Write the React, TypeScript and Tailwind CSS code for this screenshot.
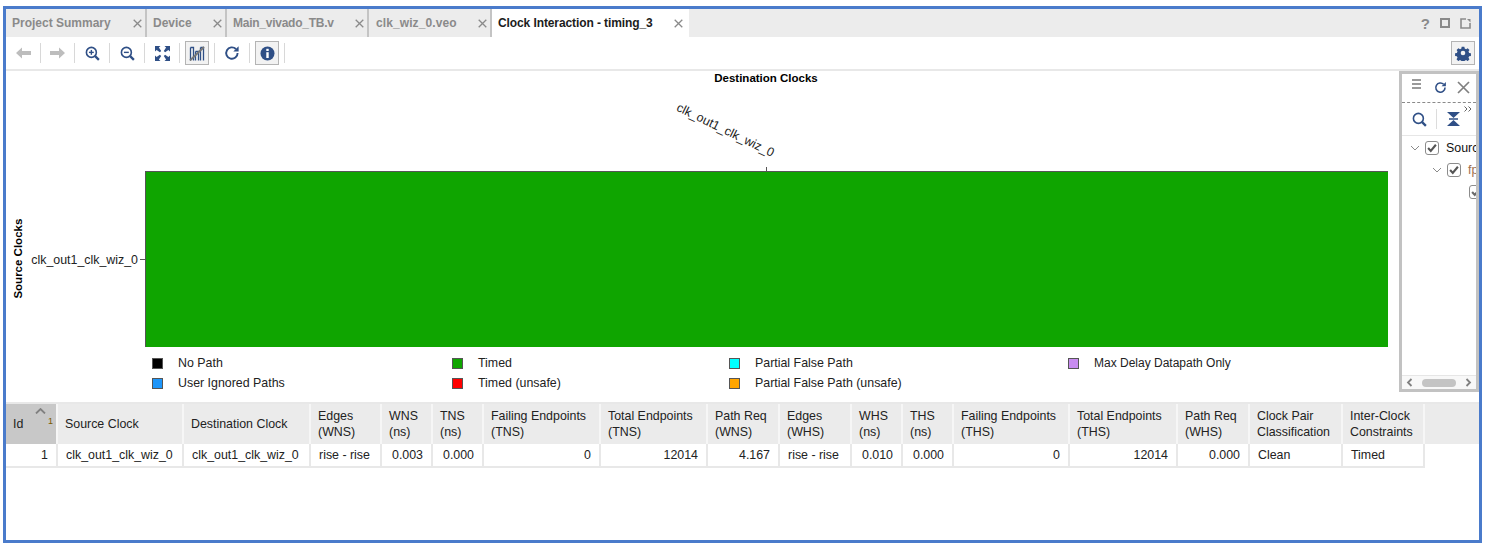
import React from "react";

const NAVY = "#2f4f86";

function X({ c = "#8a8a8a", s = 9, w = 1.3 }: { c?: string; s?: number; w?: number }) {
  return (
    <svg width={s} height={s} viewBox="0 0 9 9" className="shrink-0">
      <path d="M.7.7l7.6 7.6M8.3.7L.7 8.3" stroke={c} strokeWidth={w} fill="none" />
    </svg>
  );
}

const tabs = [
  { t: "Project Summary", w: "w-[141px] pl-[6px]", tr: "" },
  { t: "Device", w: "w-[80px] pl-[6px]", tr: "" },
  { t: "Main_vivado_TB.v", w: "w-[142px] pl-[6px]", tr: "tracking-[-0.25px]" },
  { t: "clk_wiz_0.veo", w: "w-[123px] pl-[7px]", tr: "tracking-[0.1px]" },
];

function Slot({ children }: { children: React.ReactNode }) {
  return (
    <div className="w-[35px] h-[20px] shrink-0 border-r border-[#d8d8d8] flex items-center justify-center">
      {children}
    </div>
  );
}

function Toggle({ children }: { children: React.ReactNode }) {
  return (
    <div className="w-[24px] h-[24px] border border-[#b4b4b4] bg-[#f2f2f2] flex items-center justify-center">
      {children}
    </div>
  );
}

function Lens({ sign }: { sign?: "plus" | "minus" }) {
  return (
    <svg width="15" height="15" viewBox="0 0 16 16">
      <circle cx="6.800" cy="6.800" r="5.300" fill="none" stroke={NAVY} strokeWidth="1.700" />
      <path d="M10.800 10.800l4 4" stroke={NAVY} strokeWidth="2.400" />
      {sign && <path d="M4.200 6.800h5.200" stroke={NAVY} strokeWidth="1.500" />}
      {sign === "plus" && <path d="M6.800 4.200v5.200" stroke={NAVY} strokeWidth="1.500" />}
    </svg>
  );
}

function Refresh({ s = 16 }: { s?: number }) {
  return (
    <svg width={s} height={s} viewBox="0 0 16 16">
      <path d="M13.600 8a5.700 5.700 0 1 1-1.700-4" fill="none" stroke={NAVY} strokeWidth="1.900" />
      <path d="M14.600 1.200v5.300H9.300z" fill={NAVY} />
    </svg>
  );
}

function Check({ gray }: { gray?: boolean }) {
  return (
    <div className="w-[14px] h-[14px] shrink-0 rounded-[3px] border border-[#8c8c8c] bg-white flex items-center justify-center">
      <svg width="10" height="10" viewBox="0 0 9 9">
        <path d="M1 4.500l2.400 2.600L8 1.600" fill="none" stroke={gray ? "#6a6a6a" : "#555"} strokeWidth="1.900" />
      </svg>
    </div>
  );
}

function Chevron() {
  return (
    <svg width="10" height="7" viewBox="0 0 10 7" className="shrink-0">
      <path d="M1 1l4 4 4-4" fill="none" stroke="#8a8a8a" strokeWidth="1" />
    </svg>
  );
}

function Legend({ c, t, tc = "" }: { c: string; t: string; tc?: string }) {
  return (
    <div className="flex items-center h-[20px]">
      <div className="w-[11px] h-[11px] border border-[#555] shrink-0" style={{ backgroundColor: c }} />
      <span className={`ml-[15px] whitespace-nowrap ${tc}`}>{t}</span>
    </div>
  );
}

const cols = [
  { w: "w-[52px]", h: ["Id"], v: "1", a: "r" },
  { w: "w-[126px]", h: ["Source Clock"], v: "clk_out1_clk_wiz_0", a: "l" },
  { w: "w-[127px]", h: ["Destination Clock"], v: "clk_out1_clk_wiz_0", a: "l" },
  { w: "w-[71px]", h: ["Edges", "(WNS)"], v: "rise - rise", a: "l" },
  { w: "w-[51px]", h: ["WNS", "(ns)"], v: "0.003", a: "r" },
  { w: "w-[51px]", h: ["TNS", "(ns)"], v: "0.000", a: "r" },
  { w: "w-[117px]", h: ["Failing Endpoints", "(TNS)"], v: "0", a: "r" },
  { w: "w-[107px]", h: ["Total Endpoints", "(TNS)"], v: "12014", a: "r" },
  { w: "w-[72px]", h: ["Path Req", "(WNS)"], v: "4.167", a: "r" },
  { w: "w-[72px]", h: ["Edges", "(WHS)"], v: "rise - rise", a: "l" },
  { w: "w-[51px]", h: ["WHS", "(ns)"], v: "0.010", a: "r" },
  { w: "w-[51px]", h: ["THS", "(ns)"], v: "0.000", a: "r" },
  { w: "w-[116px]", h: ["Failing Endpoints", "(THS)"], v: "0", a: "r" },
  { w: "w-[108px]", h: ["Total Endpoints", "(THS)"], v: "12014", a: "r" },
  { w: "w-[72px]", h: ["Path Req", "(WHS)"], v: "0.000", a: "r" },
  { w: "w-[93px]", h: ["Clock Pair", "Classification"], v: "Clean", a: "l" },
  { w: "w-[82px]", h: ["Inter-Clock", "Constraints"], v: "Timed", a: "l" },
];

export default function App() {
  return (
    <div className="w-[1490px] h-[556px] bg-white pt-[6px] pl-[3px] overflow-hidden" style={{ fontFamily: '"Liberation Sans", Arial, sans-serif' }}>
      <div className="w-[1479px] h-[537px] border-[3px] border-[#4a7bcb] bg-white flex flex-col text-[12.4px] text-[#222] overflow-hidden">
        {/* tabs */}
        <div className="h-[28px] bg-[#ececec] flex shrink-0 text-[12px]">
          {tabs.map((x) => (
            <div key={x.t} className={`${x.w} h-full shrink-0 flex items-center border-r-2 border-[#c4c4c4] pr-[3px] justify-between`}>
              <span className={`font-bold text-[#8a8a8a] whitespace-nowrap ${x.tr}`}>{x.t}</span>
              <X />
            </div>
          ))}
          <div className="w-[197px] h-full bg-white flex items-center pl-[6px] pr-[6px] justify-between shrink-0">
            <span className="font-bold text-[#1c1c1c] whitespace-nowrap tracking-[-0.1px]">Clock Interaction - timing_3</span>
            <X />
          </div>
          <div className="flex-1 flex items-center justify-end gap-[10px] pr-[8px]">
            <span className="font-bold text-[15px] text-[#8a8a8a] leading-none">?</span>
            <div className="w-[10px] h-[10px] border-2 border-[#8a8a8a]" />
            <svg width="11" height="11" viewBox="0 0 11 11">
              <path d="M6 1H1v9h9V5" fill="none" stroke="#8a8a8a" strokeWidth="1.600" />
              <path d="M7 1h3.500v3.500z" fill="#8a8a8a" />
            </svg>
          </div>
        </div>
        {/* toolbar */}
        <div className="h-[34px] border-b-2 border-[#e8e8e8] flex items-center shrink-0 pr-[4px]">
          <Slot><svg width="15" height="12" viewBox="0 0 15 12"><path d="M0 6l6-5.500V4h9v4H6v3.500z" fill="#bdbdbd" /></svg></Slot>
          <div className="w-[34px] h-[20px] shrink-0 border-r border-[#d8d8d8] flex items-center justify-center">
            <svg width="15" height="12" viewBox="0 0 15 12"><path d="M15 6L9 .5V4H0v4h9v3.500z" fill="#bdbdbd" /></svg>
          </div>
          <Slot><Lens sign="plus" /></Slot>
          <Slot><Lens sign="minus" /></Slot>
          <Slot>
            <svg width="15" height="15" viewBox="0 0 15 15">
              <path d="M0 0h5.500L3.900 1.600 6.200 4.900 4.900 6.200 1.600 3.900 0 5.500zM15 0v5.500l-1.600-1.600-3.300 2.300-1.300-1.300 2.300-3.300L9.500 0zM0 15V9.500l1.600 1.600 3.300-2.300 1.300 1.300-2.300 3.300L5.500 15zM15 15H9.500l1.600-1.600-2.300-3.300 1.300-1.300 3.300 2.300L15 9.500z" fill={NAVY} />
            </svg>
          </Slot>
          <div className="w-[35px] h-[20px] shrink-0 border-r border-[#d8d8d8] flex items-center justify-center">
            <Toggle>
              <svg width="16" height="15" viewBox="0 0 16 15">
                <path d="M1.500 1.500h3v13M1.500 1.500v13M6.500 5.500h3v9M6.500 5.500v9M11.500 1.500h3v13M11.500 1.500v13" fill="none" stroke={NAVY} strokeWidth="1.300" />
                <path d="M1 14.500L15 1" stroke="#777" strokeWidth="1.900" />
              </svg>
            </Toggle>
          </div>
          <Slot><Refresh /></Slot>
          <div className="w-[35px] h-[20px] shrink-0 border-r border-[#d8d8d8] flex items-center justify-center">
            <Toggle>
              <svg width="15" height="15" viewBox="0 0 15 15">
                <circle cx="7.500" cy="7.500" r="7" fill={NAVY} />
                <rect x="6.300" y="2.800" width="2.400" height="2.200" fill="#fff" />
                <rect x="6.300" y="6.200" width="2.400" height="5.800" fill="#fff" />
              </svg>
            </Toggle>
          </div>
          <div className="ml-auto w-[24px] h-[24px] border border-[#b4b4b4] bg-[#f2f2f2] flex items-center justify-center">
            <svg width="16" height="16" viewBox="0 0 16 16">
              <path d="M6.500 1h3l.4 2 1.500.7 1.800-1.100 2 2-1.100 1.800.7 1.500 2 .4v3l-2 .4-.7 1.500 1.100 1.800-2 2-1.800-1.100-1.500.7-.4 2h-3l-.4-2-1.500-.7-1.800 1.100-2-2 1.100-1.800-.7-1.500-2-.4v-3l2-.4.7-1.500L.9 4.600l2-2 1.800 1.100 1.500-.7z" transform="translate(.8 .8) scale(.9)" fill={NAVY} />
              <circle cx="8" cy="8" r="2.300" fill="#f2f2f2" />
            </svg>
          </div>
        </div>
        {/* main */}
        <div className="flex h-[331px] shrink-0">
          {/* chart */}
          <div className="w-[1393px] shrink-0 flex flex-col">
            <div className="h-[100px] relative shrink-0">
              <div className="text-[11.500px] font-bold text-black text-center leading-none pt-[2px] pl-[127px]">Destination Clocks</div>
              <div className="absolute left-[666px] top-[53px] whitespace-nowrap rotate-[26deg] origin-center text-[12.400px] leading-none">clk_out1_clk_wiz_0</div>
              <div className="absolute left-[760px] bottom-0 w-px h-[4px] bg-[#555]" />
            </div>
            <div className="flex h-[176px] shrink-0">
              <div className="w-[26px] shrink-0 flex items-center justify-center">
                <span className="-rotate-90 whitespace-nowrap font-bold text-[11.500px] text-black">Source Clocks</span>
              </div>
              <div className="w-[107px] shrink-0 flex items-center justify-end whitespace-nowrap pt-[3px] pr-[1px]">clk_out1_clk_wiz_0</div>
              <div className="w-[6px] shrink-0 flex items-center pl-[1px]"><div className="w-[5px] h-px bg-[#555]" /></div>
              <div className="w-[1243px] shrink-0 bg-[#0fa500] border-t border-l border-[#555]" />
            </div>
            <div className="pl-[146px] pt-[6px] flex">
              <div className="w-[300px]">
                <Legend c="#000000" t="No Path" />
                <Legend c="#1e96fa" t="User Ignored Paths" />
              </div>
              <div className="w-[277px]">
                <Legend c="#0fa500" t="Timed" />
                <Legend c="#ff0000" t="Timed (unsafe)" />
              </div>
              <div className="w-[339px]">
                <Legend c="#00ffff" t="Partial False Path" />
                <Legend c="#ffa500" t="Partial False Path (unsafe)" />
              </div>
              <div>
                <Legend c="#c88cf0" t="Max Delay Datapath Only" tc="text-[12px]" />
              </div>
            </div>
          </div>
          {/* side panel */}
          <div className="w-[80px] h-[321px] shrink-0 border-[3px] border-[#c2c2c2] flex flex-col overflow-hidden">
            <div className="h-[29px] border-b border-dashed border-[#8a8a8a] flex items-center shrink-0 pl-[10px] pb-[2px]">
              <svg width="9" height="10" viewBox="0 0 9 10" className="-mt-[6px]"><path d="M0 1h9M0 5h9M0 9h9" stroke="#9a9a9a" strokeWidth="2" /></svg>
              <div className="ml-[13px]"><Refresh s={13} /></div>
              <div className="ml-[10px]"><X c="#808080" s={13} w={1.200} /></div>
            </div>
            <div className="h-[33px] border-b border-[#e6e6e6] flex items-center shrink-0 pl-[10px] relative">
              <Lens />
              <div className="w-px h-[20px] bg-[#dcdcdc] ml-[9px]" />
              <svg className="ml-[10px]" width="13" height="16" viewBox="0 0 13 16">
                <path d="M0 1h13L6.500 7z" fill={NAVY} />
                <path d="M0 15h13L6.500 9z" fill={NAVY} />
                <path d="M2 8h9" stroke={NAVY} strokeWidth="1.500" />
              </svg>
              <svg className="absolute left-[62px] top-[3px]" width="8" height="6" viewBox="0 0 8 6">
                <path d="M.5.5L3 3 .5 5.500M4.500.5L7 3 4.500 5.500" fill="none" stroke="#666" strokeWidth="1" />
              </svg>
            </div>
            <div className="flex-1 overflow-hidden text-[#111] pt-[1px]">
              <div className="flex items-center h-[22px] pl-[8px] gap-[5px] whitespace-nowrap"><Chevron /><Check /><span className="ml-[2px]">Source</span></div>
              <div className="flex items-center h-[22px] pl-[30px] gap-[5px] whitespace-nowrap"><Chevron /><Check /><span className="ml-[2px] text-[#a07050]">fpga</span></div>
              <div className="flex items-center h-[22px] pl-[67px] whitespace-nowrap"><Check gray /></div>
            </div>
            <div className="h-[14px] shrink-0 bg-[#f8f8f8] border-t border-[#e6e6e6] flex items-center justify-between px-[4px]">
              <svg width="7" height="9" viewBox="0 0 7 9"><path d="M5.500 1L2 4.500 5.500 8" fill="none" stroke="#808080" strokeWidth="1.800" /></svg>
              <div className="w-[34px] h-[8px] rounded-full bg-[#c4c4c4]" />
              <svg width="7" height="9" viewBox="0 0 7 9"><path d="M1.500 1L5 4.500 1.500 8" fill="none" stroke="#808080" strokeWidth="1.800" /></svg>
            </div>
          </div>
        </div>
        {/* table */}
        <div className="flex-1 border-t-2 border-[#e8e8e8]">
          <div className="flex h-[40px] bg-[#ebebeb]">
            {cols.map((c, i) => (
              <div key={i} className={`${c.w} shrink-0 border-r-2 border-[#f6f6f6] flex flex-col justify-center leading-[16px] pl-[7px] relative ${i === 0 ? "bg-[#c8c8c8]" : ""}`}>
                {c.h.map((l) => (
                  <span key={l} className="whitespace-nowrap">{l}</span>
                ))}
                {i === 0 && (
                  <>
                    <svg className="absolute left-[29px] top-[4px]" width="11" height="6" viewBox="0 0 11 6"><path d="M1 5.500l4.500-4.500L10 5.500" fill="none" stroke="#808080" strokeWidth="1.800" /></svg>
                    <span className="absolute left-[42px] top-[13px] text-[9px] leading-none text-[#7a5a00]">1</span>
                  </>
                )}
              </div>
            ))}
          </div>
          <div className="flex h-[24px]">
            {cols.map((c, i) => (
              <div key={i} className={`${c.w} shrink-0 border-r-2 border-b-2 border-[#e8e8e8] flex items-center whitespace-nowrap pt-[1px] px-[8px] ${c.a === "r" ? "justify-end" : ""}`}>
                {c.v}
              </div>
            ))}
          </div>
        </div>
      </div>
    </div>
  );
}
